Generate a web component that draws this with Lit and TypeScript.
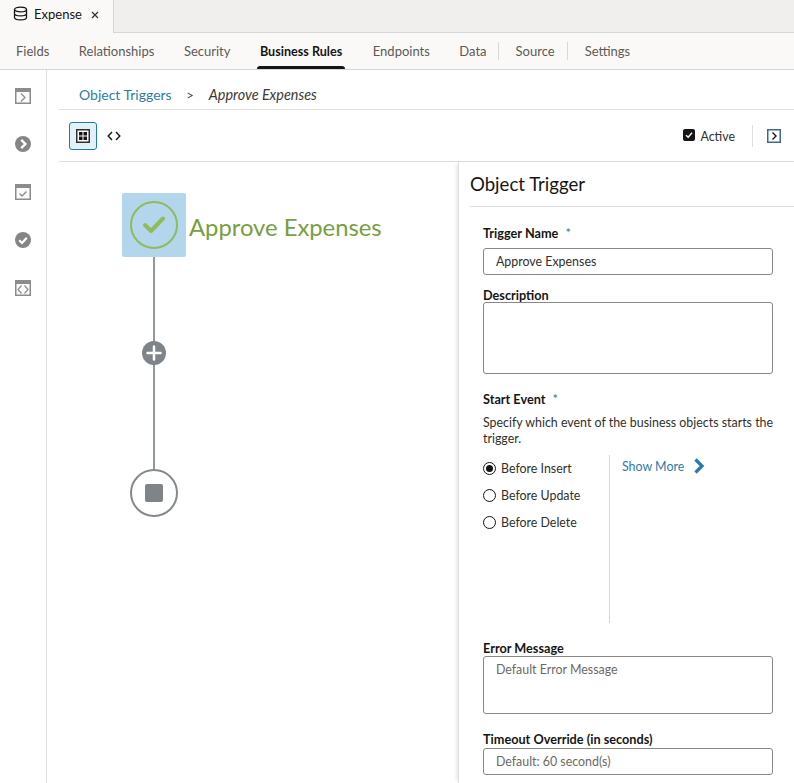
import { LitElement, html, css } from "lit";
import { customElement } from "lit/decorators.js";

@customElement("app-root")
export class AppRoot extends LitElement {
  static styles = css`
    :host { display: block; width: 794px; height: 783px; overflow: hidden; background: #fff; font-family: Lato, "Noto Sans", sans-serif; font-size: 12.4px; color: #161513; }
    * { box-sizing: border-box; }
    .strip { height: 33px; background: #f1efed; border-bottom: 1px solid #d9d7d5; display: flex; }
    .doc { width: 114px; height: 33px; background: #fbf9f8; border-right: 1px solid #d9d7d5; display: flex; align-items: center; padding: 0 0 6px 13px; font-size: 13px; }
    .doc .name { margin-left: 6px; }
    .doc .x { margin-left: 9px; display: flex; margin-top: 2px; }
    .tabs { height: 37px; background: #fbf9f8; border-bottom: 1px solid #d9d7d5; display: flex; align-items: center; padding-left: 16px; color: #5c5956; font-size: 13px; position: relative; }
    .tab { height: 36px; display: flex; align-items: center; position: relative; white-space: nowrap; }
    .tab.on { color: #161513; font-weight: 700; font-size: 12.6px; }
    .tab.on::after { content: ""; position: absolute; left: -3px; right: -3px; bottom: 0; height: 3px; background: #161513; border-radius: 3px 3px 0 0; }
    .sep { width: 1px; height: 18px; background: #d9d7d5; }
    .body { display: flex; height: 713px; }
    .rail { width: 47px; border-right: 1px solid #e0dfdd; display: flex; flex-direction: column; align-items: center; padding-top: 18px; gap: 32px; flex: none; }
    .rail svg { display: block; }
    .main { flex: 1; min-width: 0; display: flex; flex-direction: column; }
    .crumbs { height: 40px; margin-left: 12px; border-bottom: 1px solid #e0dfdd; display: flex; align-items: center; padding: 10px 0 0 20px; font-size: 14px; }
    .crumbs .link { color: #2f7ba6; }
    .crumbs .gt { margin: 0 15px 0 14.500px; color: #4a4845; font-size: 13px; }
    .crumbs .cur { font-style: italic; color: #3b3936; font-size: 14.4px; }
    .tools { height: 52px; margin-left: 12px; border-bottom: 1px solid #e0dfdd; display: flex; align-items: center; padding: 0 13px 0 10px; }
    .grid { width: 28px; height: 28px; border: 1px solid #227e9e; background: #e4f0f7; border-radius: 3px; display: flex; align-items: center; justify-content: center; }
    .code { margin-left: 10px; display: flex; }
    .active { margin-left: auto; display: flex; align-items: center; font-size: 12.4px; color: #312f2c; padding-top: 1px; }
    .cb { width: 12px; height: 12px; border-radius: 2px; background: #161513; display: flex; align-items: center; justify-content: center; margin-right: 5px; margin-top: -3px; }
    .vr { width: 1px; height: 22px; background: #e0dfdd; margin: 0 14px 0 17px; }
    .work { flex: 1; display: flex; min-height: 0; }
    .canvas { width: 411px; position: relative; flex: none; }
    .node { position: absolute; left: 75px; top: 31px; width: 64px; height: 64px; background: #b3d6ed; border-radius: 2px; display: flex; align-items: center; justify-content: center; }
    .nlabel { position: absolute; left: 142px; top: 47px; font-size: 23.8px; line-height: 36px; color: #76a03f; white-space: nowrap; font-family: Lato, "Open Sans", sans-serif; }
    .line { position: absolute; left: 106px; top: 95px; width: 2px; height: 213px; background: #8d99a3; }
    .plus { position: absolute; left: 95px; top: 179px; }
    .stop { position: absolute; left: 83px; top: 307px; }
    .panel { flex: 1; border-left: 1px solid #e0dfdd; box-shadow: -3px 0 4px -2px rgba(0,0,0,.12); padding-left: 11px; min-width: 0; }
    .ptitle { height: 45px; border-bottom: 1px solid #e0dfdd; font-size: 18.6px; line-height: 44px; color: #161513; }
    .form { padding-left: 13px; width: 303px; }
    label { display: block; font-weight: 700; font-size: 12.7px; line-height: 16px; color: #161513; }
    label .req { color: #227e9e; margin-left: 4px; font-weight: 400; }
    .field { height: 27px; width: 290px; border: 1px solid #8a8886; border-radius: 3px; padding: 0 12px; display: flex; align-items: center; color: #312f2c; }
    .area { height: 72px; width: 290px; border: 1px solid #8a8886; border-radius: 3px; }
    .ph { color: #6b6966; }
    .help { width: 295px; line-height: 16px; color: #312f2c; margin-top: 8px; }
    .choice { display: flex; margin-top: 8px; height: 168px; }
    .radios { width: 127px; border-right: 1px solid #d9d7d5; display: flex; flex-direction: column; gap: 9px; padding-top: 4px; }
    .radio { display: flex; align-items: center; height: 18px; color: #312f2c; white-space: nowrap; }
    .dot { width: 13px; height: 13px; border: 1px solid #161513; border-radius: 50%; margin-right: 5px; display: flex; align-items: center; justify-content: center; flex: none; }
    .dot i { width: 7px; height: 7px; background: #161513; border-radius: 50%; }
    .more { display: flex; align-items: center; color: #2f7ba6; padding: 1px 0 0 12px; height: 21px; }
    .more svg { margin-left: 9px; }
  `;

  render() {
    const tabs: [string, number, boolean?][] = [
      ["Fields", 30], ["Relationships", 29.5], ["Security", 29.5], ["Business Rules", 29.5, true], ["Endpoints", 30.5], ["Data", 29.5],
    ];
    return html`
      <div class="strip">
        <div class="doc">
          <svg width="15" height="15" viewBox="0 0 15 15" fill="none" stroke="#161513" stroke-width="1.3"><ellipse cx="7.5" cy="3.5" rx="6" ry="2.4"/><path d="M1.5 3.5v8c0 1.3 2.7 2.4 6 2.4s6-1.1 6-2.4v-8M1.5 7.5c0 1.3 2.7 2.4 6 2.4s6-1.1 6-2.4"/></svg>
          <span class="name">Expense</span>
          <span class="x"><svg width="8" height="8" viewBox="0 0 8 8" stroke="#312f2c" stroke-width="1.2"><path d="M1 1l6 6M7 1L1 7"/></svg></span>
        </div>
      </div>
      <div class="tabs">
        ${tabs.map(([t, m, on], i) => html`<div class="tab ${on ? "on" : ""}" style="margin-left:${i ? m : 0}px">${t}</div>`)}
        <div class="sep" style="margin-left:11px"></div>
        <div class="tab" style="margin-left:17px">Source</div>
        <div class="sep" style="margin-left:12px"></div>
        <div class="tab" style="margin-left:17px">Settings</div>
      </div>
      <div class="body">
        <div class="rail">
          <svg width="16" height="16" viewBox="0 0 16 16"><rect x=".75" y=".75" width="14.500" height="14.500" fill="#fafafa" stroke="#8c8c8c" stroke-width="1.500"/><rect width="16" height="4" fill="#8c8c8c"/><path d="M6 5.500l4 4-4 4" fill="none" stroke="#8c8c8c" stroke-width="1.200"/></svg>
          <svg width="16" height="16" viewBox="0 0 16 16"><circle cx="8" cy="8" r="8" fill="#858585"/><path d="M6.200 3.800L10.400 8l-4.200 4.200" fill="none" stroke="#fff" stroke-width="2.400"/></svg>
          <svg width="16" height="16" viewBox="0 0 16 16"><rect x=".75" y=".75" width="14.500" height="14.500" fill="#fafafa" stroke="#8c8c8c" stroke-width="1.500"/><rect width="16" height="4" fill="#8c8c8c"/><path d="M4.500 9.500l2.500 2.500 4.500-4.500" fill="none" stroke="#8c8c8c" stroke-width="1.300"/></svg>
          <svg width="16" height="16" viewBox="0 0 16 16"><circle cx="8" cy="8" r="8" fill="#858585"/><path d="M4.200 8.300l2.800 2.700 4.800-5.200" fill="none" stroke="#fff" stroke-width="2.200"/></svg>
          <svg width="16" height="16" viewBox="0 0 16 16"><rect x=".75" y=".75" width="14.500" height="14.500" fill="#fafafa" stroke="#8c8c8c" stroke-width="1.500"/><rect width="16" height="4" fill="#8c8c8c"/><path d="M6.500 5.500L3 9.500l3.500 4M9.500 5.500l3.500 4-3.500 4" fill="none" stroke="#8c8c8c" stroke-width="1.200"/></svg>
        </div>
        <div class="main">
          <div class="crumbs"><span class="link">Object Triggers</span><span class="gt">&gt;</span><span class="cur">Approve Expenses</span></div>
          <div class="tools">
            <div class="grid"><svg width="14" height="14" viewBox="0 0 14 14"><rect x=".75" y=".75" width="12.500" height="12.500" fill="#fff" stroke="#312f2c" stroke-width="1.500"/><rect x="3" y="3" width="3.500" height="3.500" fill="#161513"/><rect x="7.500" y="3" width="3.500" height="3.500" fill="#161513"/><rect x="3" y="7.500" width="3.500" height="3.500" fill="#161513"/><rect x="7.500" y="7.500" width="3.500" height="3.500" fill="#161513"/></svg></div>
            <span class="code"><svg width="14" height="10" viewBox="0 0 14 10" fill="none" stroke="#161513" stroke-width="1.400"><path d="M5 1L1.200 5 5 9M9 1l3.800 4L9 9"/></svg></span>
            <div class="active">
              <span class="cb"><svg width="8" height="8" viewBox="0 0 8 8" fill="none" stroke="#fff" stroke-width="1.400"><path d="M1 4.200L3.200 6.300 7 1.700"/></svg></span>
              Active
              <span class="vr"></span>
              <svg width="14" height="14" viewBox="0 0 14 14" fill="none"><rect x=".75" y=".75" width="12.500" height="12.500" stroke="#3f6a85" stroke-width="1.500"/><path d="M5.500 3.500L9 7l-3.500 3.500" stroke="#161513" stroke-width="1.400"/></svg>
            </div>
          </div>
          <div class="work">
            <div class="canvas">
              <div class="line"></div>
              <div class="node"><svg width="48" height="48" viewBox="0 0 48 48" fill="none"><circle cx="24" cy="24" r="23" stroke="#8fbb59" stroke-width="2"/><path d="M15 24l6 6L33 17.500" stroke="#8fbb59" stroke-width="4" stroke-linecap="round" stroke-linejoin="round"/></svg></div>
              <div class="nlabel">Approve Expenses</div>
              <svg class="plus" width="24" height="24" viewBox="0 0 24 24"><circle cx="12" cy="12" r="12" fill="#7f8488"/><path d="M12 5.500v13M5.500 12h13" stroke="#fff" stroke-width="2.500" stroke-linecap="round"/></svg>
              <svg class="stop" width="48" height="48" viewBox="0 0 48 48"><circle cx="24" cy="24" r="23" fill="#fff" stroke="#85898c" stroke-width="2"/><rect x="15" y="15" width="18" height="18" rx="2" fill="#7f8488"/></svg>
            </div>
            <div class="panel">
              <div class="ptitle">Object Trigger</div>
              <div class="form">
                <label style="margin-top:18px">Trigger Name <span class="req">*</span></label>
                <div class="field" style="margin-top:7px">Approve Expenses</div>
                <label style="margin-top:12px">Description</label>
                <div class="area" style="margin-top:-1px"></div>
                <label style="margin-top:17px">Start Event <span class="req">*</span></label>
                <div class="help">Specify which event of the business objects starts the trigger.</div>
                <div class="choice">
                  <div class="radios">
                    <div class="radio"><span class="dot"><i></i></span>Before Insert</div>
                    <div class="radio"><span class="dot"></span>Before Update</div>
                    <div class="radio"><span class="dot"></span>Before Delete</div>
                  </div>
                  <div class="more">Show More<svg width="12" height="16" viewBox="0 0 12 16" fill="none" stroke="#227bb8" stroke-width="3.200"><path d="M2.500 1.500L9 8l-6.500 6.500"/></svg></div>
                </div>
                <label style="margin-top:17px">Error Message</label>
                <div class="area ph" style="height:58px;margin-top:0;padding:5px 12px">Default Error Message</div>
                <label style="margin-top:17px">Timeout Override (in seconds)</label>
                <div class="field ph" style="margin-top:1px">Default: 60 second(s)</div>
              </div>
            </div>
          </div>
        </div>
      </div>
    `;
  }
}
